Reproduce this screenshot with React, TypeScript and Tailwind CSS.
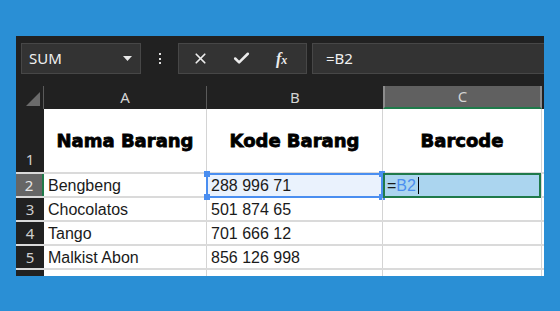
import { X, Check } from "lucide-react";

const rows = [
  { n: 2, a: "Bengbeng", b: "288 996 71" },
  { n: 3, a: "Chocolatos", b: "501 874 65" },
  { n: 4, a: "Tango", b: "701 666 12" },
  { n: 5, a: "Malkist Abon", b: "856 126 998" },
];

const ui = { fontFamily: '"Noto Sans", "Open Sans", sans-serif' };
const cell = { fontFamily: '"Liberation Sans", Arial, sans-serif' };

function Handle({ pos }: { pos: string }) {
  return <div className={`absolute w-[6px] h-[6px] bg-[#4a8ef0] ${pos}`} />;
}

export default function App() {
  return (
    <div className="w-[560px] h-[311px] bg-[#2a8fd5] pt-[36px] pl-[16px] overflow-hidden">
      <div className="w-[528px] h-[240px] bg-[#212121] flex flex-col overflow-hidden" style={ui}>
        {/* Formula bar */}
        <div className="h-[50px] flex items-start pt-[7px] pl-[5px] shrink-0">
          <div className="w-[120px] h-[31px] bg-[#333333] border border-[#474747] flex items-center justify-between pl-[7px] pr-[8px]">
            <span className="text-[15px] text-[#f0f0f0]">SUM</span>
            <svg width="9" height="5" viewBox="0 0 9 5">
              <path d="M0 0h9L4.5 5z" fill="#e8e8e8" />
            </svg>
          </div>
          <div className="w-[37px] h-[31px] flex flex-col items-center justify-center gap-[2.5px]">
            <span className="w-[2px] h-[2px] bg-[#e0e0e0]" />
            <span className="w-[2px] h-[2px] bg-[#e0e0e0]" />
            <span className="w-[2px] h-[2px] bg-[#e0e0e0]" />
          </div>
          <div className="w-[129px] h-[31px] bg-[#333333] border border-[#474747] flex items-center pl-[13px]">
            <X className="w-[17px] h-[17px] text-[#ececec]" strokeWidth={2.4} />
            <Check className="w-[19px] h-[19px] ml-[23px] text-[#ececec]" strokeWidth={3.2} />
            <span
              className="ml-[25px] text-[#ececec] italic font-bold text-[16px] leading-none"
              style={{ fontFamily: '"Liberation Serif", serif' }}
            >
              f<span className="text-[12px]">x</span>
            </span>
          </div>
          <div className="flex-1 ml-[5px] h-[31px] bg-[#333333] border-y border-l border-[#474747] flex items-center pl-[13px]">
            <span className="text-[15px] text-[#f0f0f0]">=B2</span>
          </div>
        </div>

        {/* Column headers */}
        <div className="h-[23px] flex shrink-0 text-[#d4d4d4] text-[15px]">
          <div className="w-[28px] flex items-end justify-end pr-[3px] pb-[3px] border-r border-[#5a5a5a]">
            <svg width="14" height="14" viewBox="0 0 14 14">
              <path d="M14 0V14H0z" fill="#6b6b6b" />
            </svg>
          </div>
          <div className="w-[163px] flex items-center justify-center border-r border-[#5a5a5a]">A</div>
          <div className="w-[176px] flex items-center justify-center">B</div>
          <div className="w-[159px] flex items-center justify-center bg-[#606060] border-x-2 border-[#8c8c8c] border-b-2 border-b-[#1f7a4a]">C</div>
        </div>

        {/* Sheet */}
        <div className="flex-1 flex flex-col bg-white" style={cell}>
          {/* Row 1 */}
          <div className="h-[65px] flex border-b-2 border-[#dadada]">
            <div className="w-[28px] bg-[#212121] flex items-end justify-center pb-[2px] text-[15px] text-[#cfcfcf]" style={ui}>1</div>
            {["Nama Barang", "Kode Barang", "Barcode"].map((t, i) => (
              <div
                key={t}
                className={`${i === 0 ? "w-[163px]" : i === 1 ? "w-[176px]" : "w-[159px]"} flex items-center justify-center border-r border-[#d4d4d4] text-[18px] font-bold text-black [-webkit-text-stroke:0.8px_black]`}
                style={{ fontFamily: '"DejaVu Sans", sans-serif' }}
              >
                {t}
              </div>
            ))}
          </div>

          {rows.map((r) => (
            <div key={r.n} className="h-[24px] flex border-b-2 border-[#dadada]">
              <div
                className={`w-[28px] flex items-center justify-center text-[15px] ${
                  r.n === 2 ? "bg-[#666666] text-[#e6e6e6] border-r-2 border-[#1f7a4a]" : "bg-[#212121] text-[#cfcfcf]"
                }`}
                style={ui}
              >
                {r.n}
              </div>
              <div className="w-[163px] flex items-center pl-[4px] pt-[1px] text-[16px] text-[#1a1a1a] border-r border-[#d4d4d4]">{r.a}</div>
              <div
                className={`w-[176px] relative flex items-center pl-[4px] pt-[1px] text-[16px] text-[#1a1a1a] border-r border-[#d4d4d4] ${
                  r.n === 2 ? "bg-[#eaf2fd]" : ""
                }`}
              >
                {r.b}
                {r.n === 2 && (
                  <div className="absolute left-[-1px] right-[-1px] top-[-1px] bottom-[-2px] border-2 border-[#4a8ef0]">
                    <Handle pos="left-[-4px] top-[-4px]" />
                    <Handle pos="right-[-4px] top-[-4px]" />
                    <Handle pos="left-[-4px] bottom-[-4px]" />
                    <Handle pos="right-[-4px] bottom-[-4px]" />
                  </div>
                )}
              </div>
              <div className={`w-[159px] relative flex items-center pt-[1px] text-[16px] border-r border-[#d4d4d4] ${r.n === 2 ? "bg-[#abd5ef]" : ""}`}>
                {r.n === 2 && (
                  <>
                    <span className="pl-[4px] text-[#1a1a1a]">=</span>
                    <span className="text-[#4a8ef0]">B2</span>
                    <span className="w-[1px] h-[17px] bg-black ml-[2px]" />
                    <div className="absolute left-[0px] right-[0px] top-[-1px] bottom-[-2px] border-2 border-[#1f7a4a]" />
                  </>
                )}
              </div>
            </div>
          ))}
          <div className="flex-1 flex">
            <div className="w-[28px] bg-[#212121]" />
            <div className="w-[163px] border-r border-[#d4d4d4]" />
            <div className="w-[176px] border-r border-[#d4d4d4]" />
            <div className="w-[159px] border-r border-[#d4d4d4]" />
          </div>
        </div>
      </div>
    </div>
  );
}
